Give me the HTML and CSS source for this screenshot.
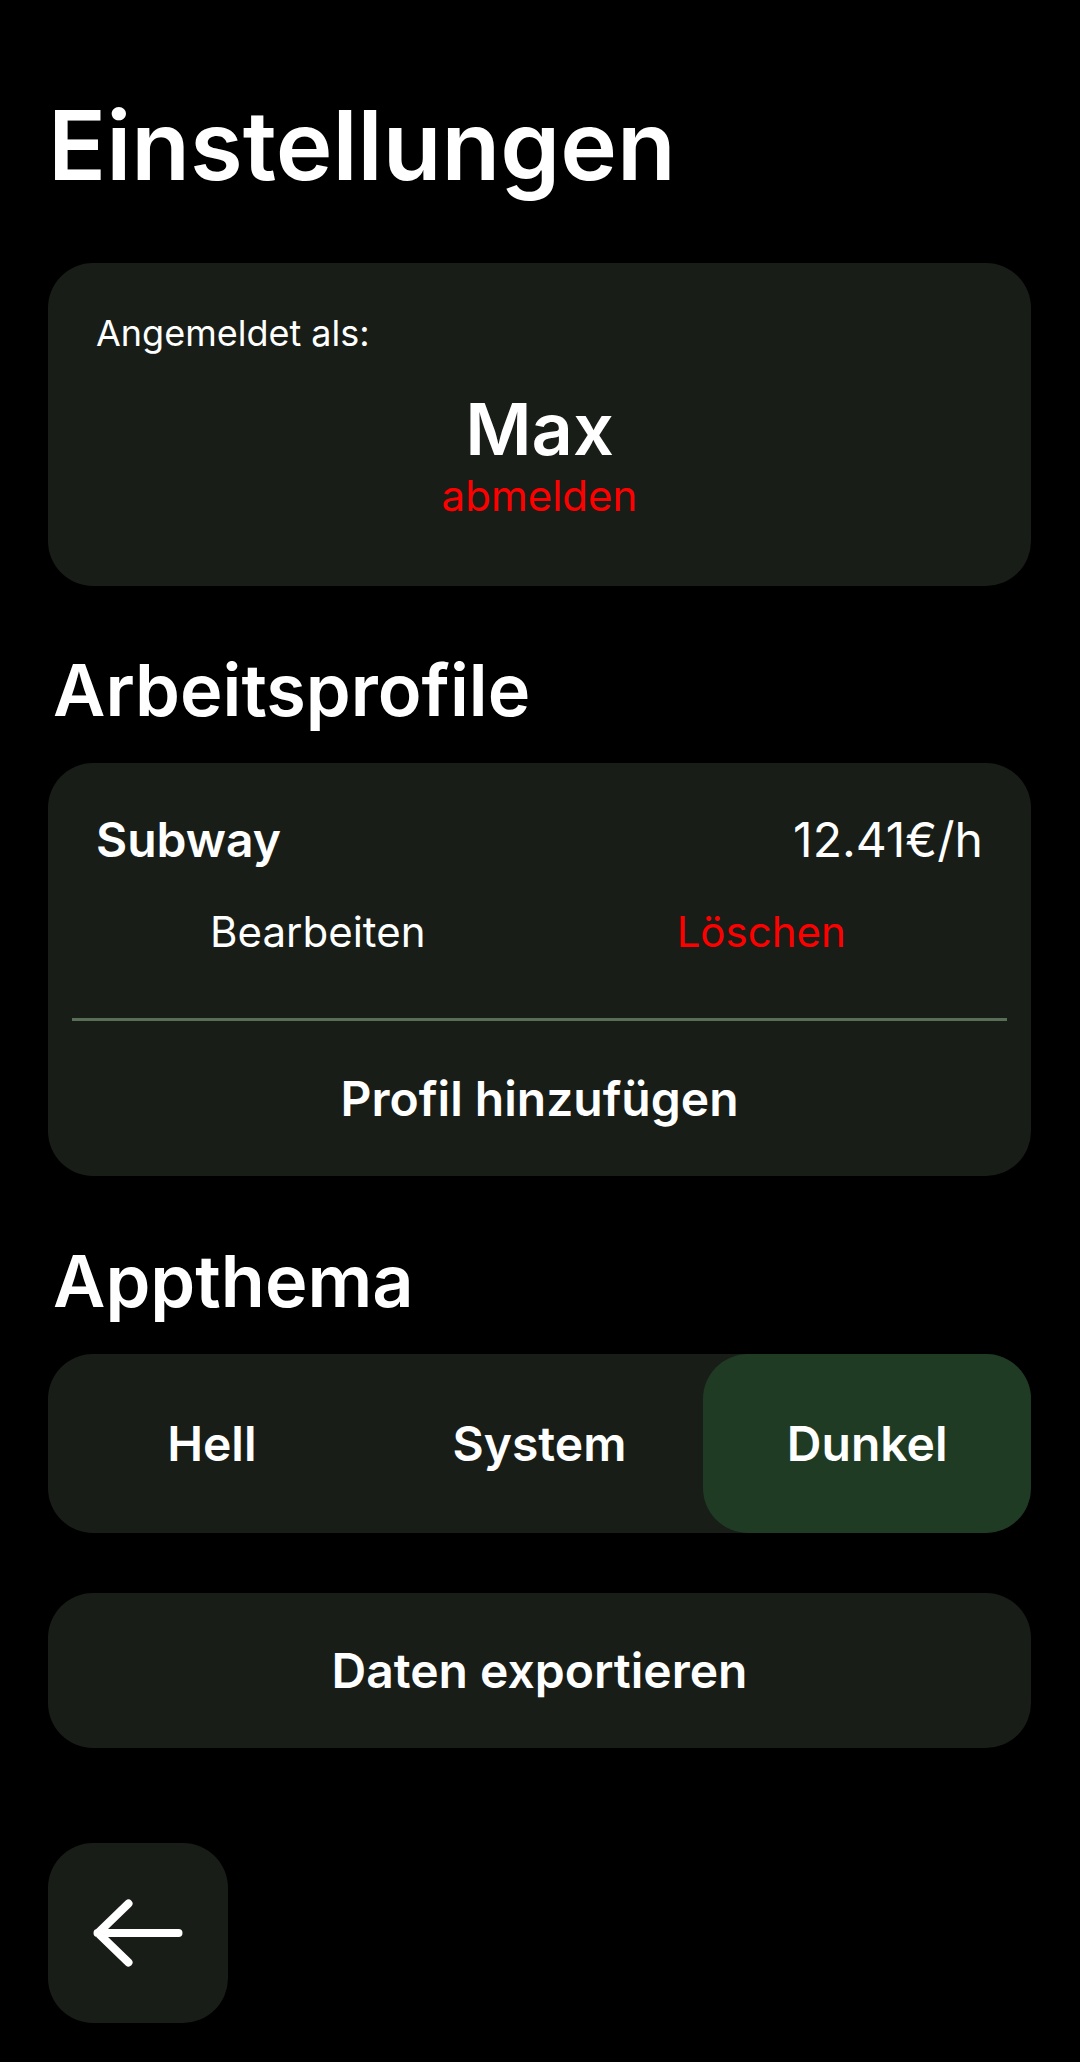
FILE: index.html
```html
<!DOCTYPE html>
<html lang="de">
<head>
<meta charset="utf-8">
<title>Einstellungen</title>
<link rel="stylesheet" href="styles.css">
</head>
<body>
<main class="screen">
  <h1 class="title">Einstellungen</h1>

  <section class="card account">
    <p class="account-label">Angemeldet als:</p>
    <p class="account-name">Max</p>
    <p class="account-logout">abmelden</p>
  </section>

  <h2 class="section-title">Arbeitsprofile</h2>

  <section class="card profiles">
    <div class="profile">
      <div class="profile-head">
        <span class="profile-name">Subway</span>
        <span class="profile-rate">12.41€/h</span>
      </div>
      <div class="profile-actions">
        <span class="action">Bearbeiten</span>
        <span class="action danger">Löschen</span>
      </div>
    </div>
    <div class="divider"></div>
    <div class="add-profile">Profil hinzufügen</div>
  </section>

  <h2 class="section-title theme-title">Appthema</h2>

  <div class="card segmented">
    <span class="segment">Hell</span>
    <span class="segment">System</span>
    <span class="segment active">Dunkel</span>
  </div>

  <div class="card export">Daten exportieren</div>

  <div class="card back">
    <svg width="96" height="72" viewBox="0 0 96 72" aria-hidden="true">
      <path d="M88.5 36H7.5M38.5 6.5L8 36L38.5 65.5" fill="none" stroke="#ffffff" stroke-width="8" stroke-linecap="round" stroke-linejoin="round"/>
    </svg>
  </div>
</main>
</body>
</html>
```

FILE: styles.css
```css
* {
  box-sizing: border-box;
}

html, body {
  margin: 0;
  padding: 0;
  background: #000000;
}

body {
  font-family: Inter, "Noto Sans", "Liberation Sans", sans-serif;
  color: #ffffff;
}

.screen {
  display: flex;
  flex-direction: column;
  padding: 87px 49px 40px 48px;
  min-height: 2062px;
}

.title {
  margin: 0;
  font-size: 96px;
  line-height: 116px;
  font-weight: 600;
}

.card {
  background: #181d18;
  border-radius: 45px;
}

.account {
  margin-top: 60px;
  padding: 48px 48px 65px;
  display: flex;
  flex-direction: column;
}

.account p {
  margin: 0;
}

.account-label {
  font-size: 36px;
  line-height: 44px;
  font-weight: 400;
}

.account-name {
  margin-top: 31px !important;
  text-align: center;
  font-size: 72px;
  line-height: 85px;
  font-weight: 600;
}

.account-logout {
  text-align: center;
  color: #ff0000;
  font-size: 42px;
  line-height: 50px;
}

.section-title {
  margin: 61px 0 0 5px;
  font-size: 72px;
  line-height: 86px;
  font-weight: 600;
}

.theme-title {
  margin-top: 62px;
}

.profiles {
  margin-top: 30px;
  padding: 48px 24px 0;
  display: flex;
  flex-direction: column;
}

.profile {
  padding: 0 24px;
}

.profile-head {
  display: flex;
  justify-content: space-between;
  align-items: baseline;
  font-size: 48px;
  line-height: 58px;
}

.profile-name {
  font-weight: 600;
}

.profile-rate {
  font-weight: 400;
}

.profile-actions {
  margin-top: 38px;
  display: grid;
  grid-template-columns: 1fr 1fr;
  font-size: 42px;
  line-height: 50px;
  text-align: center;
}

.danger {
  color: #ff0000;
}

.divider {
  margin-top: 61px;
  height: 3px;
  background: #586e56;
}

.add-profile {
  height: 155px;
  display: flex;
  align-items: center;
  justify-content: center;
  font-size: 48px;
  line-height: 58px;
  font-weight: 600;
}

.segmented {
  margin-top: 30px;
  height: 179px;
  display: grid;
  grid-template-columns: 1fr 1fr 1fr;
}

.segment {
  display: flex;
  align-items: center;
  justify-content: center;
  font-size: 48px;
  line-height: 58px;
  font-weight: 600;
  border-radius: 45px;
}

.segment.active {
  background: #1f3b23;
}

.export {
  margin-top: 60px;
  height: 155px;
  display: flex;
  align-items: center;
  justify-content: center;
  font-size: 48px;
  line-height: 58px;
  font-weight: 600;
}

.back {
  margin-top: 95px;
  width: 180px;
  height: 180px;
  display: flex;
  align-items: center;
  justify-content: center;
}
```
